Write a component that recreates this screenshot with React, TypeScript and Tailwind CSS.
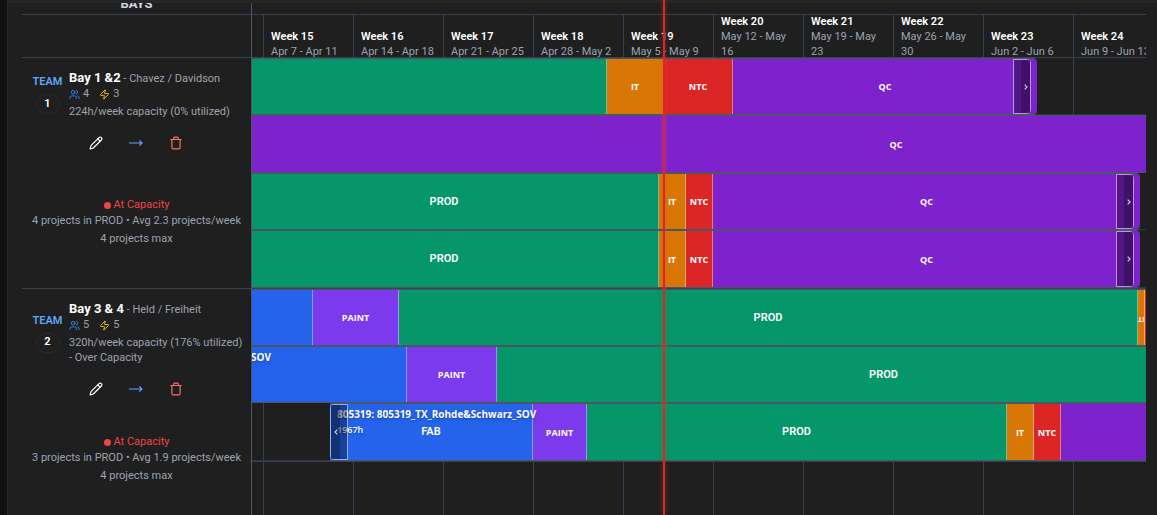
import { Pencil, Trash, Users, Zap } from "lucide-react";

type Segment = { phase: string; width: string; label?: string; size?: string; last?: boolean; flipped?: boolean };
type Row = {
  height: string;
  offset: string;
  segments: Segment[];
  handle?: "start" | "end";
  title?: string;
  hours?: string;
  titleClass?: string;
};
type Bay = {
  team: number;
  height: string;
  name: string;
  leads: string;
  assembly: number;
  electrical: number;
  capacity: string;
  load: string;
  max: string;
  rows: Row[];
};

const fab = "bg-[#2563eb]";
const paint = "bg-[#7c3aed]";
const prod = "bg-[#059669]";
const it = "bg-[#d97706]";
const ntc = "bg-[#dc2626]";
const qc = "bg-[#7e22ce]";

const prodRow = (height: string): Row => ({
  height,
  offset: "-ml-[22px]",
  handle: "end",
  segments: [
    { phase: prod, width: "w-[429px]", label: "PROD", size: "text-[11px]" },
    { phase: it, width: "w-[27px]", label: "IT" },
    { phase: ntc, width: "w-[27px]", label: "NTC" },
    { phase: qc, width: "w-[427px]", label: "QC", last: true },
  ],
});

const bays: Bay[] = [
  {
    team: 1,
    height: "h-[231px]",
    name: "Bay 1 &2",
    leads: "Chavez / Davidson",
    assembly: 4,
    electrical: 3,
    capacity: "224h/week capacity (0% utilized)",
    load: "4 projects in PROD • Avg 2.3 projects/week",
    max: "4 projects max",
    rows: [
      {
        height: "h-[57px]",
        offset: "ml-0",
        handle: "end",
        segments: [
          { phase: prod, width: "w-[355px]" },
          { phase: it, width: "w-[57px]", label: "IT" },
          { phase: ntc, width: "w-[69px]", label: "NTC" },
          { phase: qc, width: "w-[304px]", label: "QC", last: true },
        ],
      },
      {
        height: "h-[58px]",
        offset: "ml-0",
        segments: [{ phase: qc, width: "w-[1289px]", label: "QC" }],
      },
      prodRow("h-[57px]"),
      prodRow("h-[58px]"),
    ],
  },
  {
    team: 2,
    height: "h-[237px]",
    name: "Bay 3 & 4",
    leads: "Held / Freiheit",
    assembly: 5,
    electrical: 5,
    capacity: "320h/week capacity (176% utilized) - Over Capacity",
    load: "3 projects in PROD • Avg 1.9 projects/week",
    max: "4 projects max",
    rows: [
      {
        height: "h-[57px]",
        offset: "ml-0",
        segments: [
          { phase: fab, width: "w-[61px]" },
          { phase: paint, width: "w-[86px]", label: "PAINT" },
          { phase: prod, width: "w-[739px]", label: "PROD", size: "text-[11px]" },
          { phase: it, width: "w-[7px]", label: "IT", flipped: true },
          { phase: ntc, width: "w-[8px]" },
        ],
      },
      {
        height: "h-[57px]",
        offset: "-ml-[182px]",
        title: "SOV",
        titleClass: "left-[181px]",
        segments: [
          { phase: fab, width: "w-[337px]" },
          { phase: paint, width: "w-[90px]", label: "PAINT" },
          { phase: prod, width: "w-[774px]", label: "PROD", size: "text-[11px]" },
        ],
      },
      {
        height: "h-[58px]",
        offset: "ml-[78px]",
        handle: "start",
        title: "805319: 805319_TX_Rohde&Schwarz_SOV",
        titleClass: "left-[7px]",
        hours: "1967h",
        segments: [
          { phase: fab, width: "w-[203px]", label: "FAB", size: "text-[11px]" },
          { phase: paint, width: "w-[54px]", label: "PAINT" },
          { phase: prod, width: "w-[420px]", label: "PROD", size: "text-[11px]" },
          { phase: it, width: "w-[27px]", label: "IT" },
          { phase: ntc, width: "w-[27px]", label: "NTC" },
          { phase: qc, width: "w-[300px]" },
        ],
      },
    ],
  },
];

const weeks = [
  ["Week 15", "Apr 7 - Apr 11"],
  ["Week 16", "Apr 14 - Apr 18"],
  ["Week 17", "Apr 21 - Apr 25"],
  ["Week 18", "Apr 28 - May 2"],
  ["Week 19", "May 5 - May 9"],
  ["Week 20", "May 12 - May 16"],
  ["Week 21", "May 19 - May 23"],
  ["Week 22", "May 26 - May 30"],
  ["Week 23", "Jun 2 - Jun 6"],
  ["Week 24", "Jun 9 - Jun 13"],
];

function Handle({ side }: { side: "start" | "end" }) {
  const start = side === "start";
  return (
    <button
      type="button"
      aria-label={start ? "Change start date" : "Change end date"}
      className={`absolute inset-y-0 flex w-[18px] border border-white/50 ${start ? "left-0 flex-row-reverse rounded-l" : "right-[6px] rounded-r"}`}
    >
      <span className="h-full w-[7px] bg-black/35" />
      <span className="flex h-full flex-1 items-center justify-center bg-black/50">
        <svg viewBox="0 0 4 6" className="h-[6px] w-1" fill="none" stroke="#ffffff" strokeOpacity="0.75" strokeWidth="1.2">
          <path d={start ? "M3.3 .6 1 3l2.300 2.400" : "M.7 .6 3 3 .7 5.400"} />
        </svg>
      </span>
    </button>
  );
}

function ProjectBar({ row }: { row: Row }) {
  return (
    <div className={`flex overflow-hidden shadow-[inset_0_-1px_0_#2f3640] ${row.height}`}>
      <div
        className={`relative flex w-max shrink-0 border-y border-[#4b5563] ${row.offset} ${row.height} ${row.handle === "end" ? "rounded-r" : ""}`}
      >
        {row.segments.map((s, i) => (
          <div
            key={i}
            className={`flex shrink-0 items-center justify-center overflow-hidden pt-px whitespace-nowrap text-white ${s.size ? "font-semibold" : "font-['Open_Sans','Noto_Sans',sans-serif] font-bold"} ${s.size ?? "text-[9px]"} ${s.phase} ${s.width} ${s.last ? "rounded-r" : "border-r border-white/40"}`}
          >
            {s.label && <span className={s.flipped ? "rotate-180 text-[7px]" : ""}>{s.label}</span>}
          </div>
        ))}
        {row.title && (
          <div
            className={`absolute top-[3px] font-['Open_Sans','Noto_Sans',sans-serif] text-[10px] leading-[15px] font-bold whitespace-nowrap text-white text-shadow-md ${row.titleClass}`}
          >
            {row.title}
            {row.hours && <div className="text-[9px] font-semibold">{row.hours}</div>}
          </div>
        )}
        {row.handle && <Handle side={row.handle} />}
      </div>
    </div>
  );
}

function BayInfo({ bay }: { bay: Bay }) {
  return (
    <div className={`flex flex-col border-b border-[#374151] pt-[11px] pb-[41px] text-[11px] text-[#9ca3af] ${bay.height}`}>
      <div className="flex items-center gap-[7px] pl-[11px]">
        <div className="flex w-[29px] flex-col items-center">
          <span className="leading-4 font-semibold text-[#60a5fa]">TEAM</span>
          <span className="mt-1 flex h-5 w-6 items-center justify-center rounded-full border border-[#292929] font-semibold text-white">
            {bay.team}
          </span>
        </div>
        <div className="flex-1">
          <h2 className="leading-[18px] whitespace-nowrap">
            <span className="text-[13px] font-bold text-white">{bay.name}</span> - {bay.leads}
          </h2>
          <div className="flex h-3 items-center gap-[10px]">
            <span className="flex items-center gap-[3px]">
              <Users className="size-[11px] text-[#3b82f6]" />
              {bay.assembly}
            </span>
            <span className="flex items-center gap-[3px]">
              <Zap className="size-[11px] text-[#fbbf24]" />
              {bay.electrical}
            </span>
          </div>
          <p className="mt-1 pr-2 leading-[15px]">{bay.capacity}</p>
        </div>
      </div>
      <div className="mt-[14px] flex h-5 items-center justify-center gap-6 pr-[1px]">
        <button type="button" aria-label={`Edit ${bay.name}`} className="flex w-4 justify-center text-white">
          <Pencil className="size-[14px]" />
        </button>
        <button type="button" aria-label={`Move ${bay.name}`} className="flex w-4 justify-center text-[#60a5fa]">
          <svg viewBox="0 0 14 8" className="h-2 w-[14px]" fill="none" stroke="currentColor" strokeWidth="1.2">
            <path d="M0 4h13M10.300 1.300 13 4l-2.700 2.700" />
          </svg>
        </button>
        <button type="button" aria-label={`Delete ${bay.name}`} className="flex w-4 justify-center text-[#f87171]">
          <Trash className="size-[14px]" />
        </button>
      </div>
      <div className="mt-auto text-center">
        <p className="flex items-center justify-center gap-[3px] leading-4 text-[#ef4444]">
          <span className="size-[7px] rounded-full bg-[#ef4444]" />
          At Capacity
        </p>
        <p className="leading-4 whitespace-nowrap">{bay.load}</p>
        <p className="mt-[2px] leading-4">{bay.max}</p>
      </div>
    </div>
  );
}

export default function App() {
  return (
    <div className="relative flex h-screen overflow-hidden bg-[#1f1f1f] font-['Roboto','Noto_Sans',sans-serif]">
      <div className="w-2 shrink-0 border-r border-[#1f2937] bg-[#111111]" />
      <div className="flex min-w-0 flex-1 border-t-3 border-[#262626] pr-[11px] pl-[14px]">
        <aside className="w-[230px] shrink-0 border-r border-[#4b5563]">
          <div className="flex h-3 items-end justify-center overflow-hidden border-b border-[#374151]">
            <h1 className="text-[13px] leading-5 font-bold text-[#d1d5db]">BAYS</h1>
          </div>
          <div className="h-[43px] border-b border-[#374151]" />
          {bays.map((b) => (
            <BayInfo key={b.team} bay={b} />
          ))}
        </aside>
        <main className="relative min-w-0 flex-1 overflow-hidden">
          <div className="absolute inset-x-0 top-3 bottom-0 flex pl-[11px]">
            {weeks.map(([w]) => (
              <div key={w} className="w-[90px] shrink-0 border-l border-[#374151]" />
            ))}
          </div>
          <div className="relative">
            <div className="h-3 border-b border-[#374151]" />
            <div className="flex h-[43px] items-start overflow-hidden border-b border-[#374151] pl-[11px]">
              {weeks.map(([w, dates]) => (
                <div
                  key={w}
                  className="flex h-11 w-[90px] shrink-0 flex-col justify-end pr-1 pl-2 text-[11px] leading-[15px] text-[#9ca3af]"
                >
                  <div className="font-semibold text-white">{w}</div>
                  <div>{dates}</div>
                </div>
              ))}
            </div>
            {bays.map((b) => (
              <div key={b.team} className="border-b border-[#374151]">
                {b.rows.map((r, i) => (
                  <ProjectBar key={i} row={r} />
                ))}
              </div>
            ))}
          </div>
        </main>
      </div>
      <div className="absolute inset-y-0 left-[663px] w-[2px] bg-[#dc2626] shadow-[0_0_4px_rgba(239,68,68,0.5)]" />
    </div>
  );
}
